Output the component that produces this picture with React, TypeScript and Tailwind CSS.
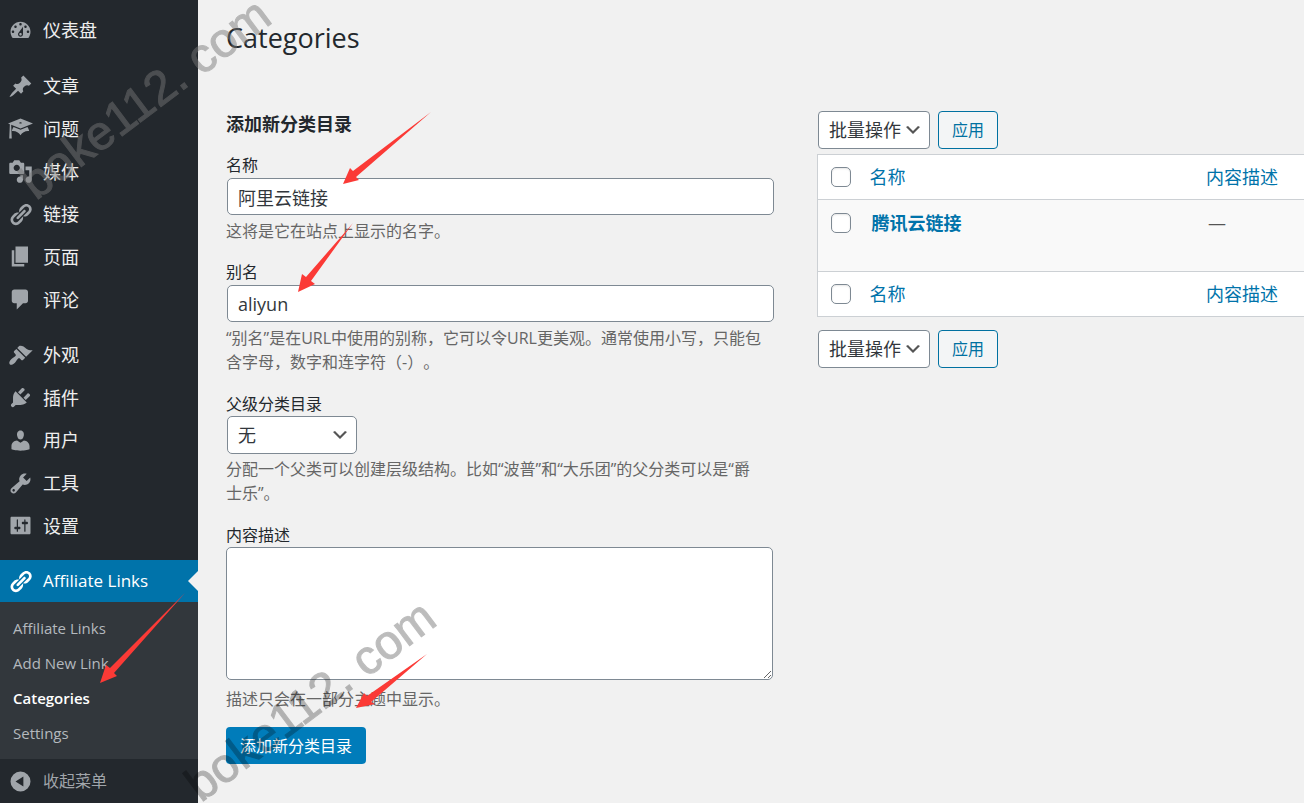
import React from 'react';

interface IconProps {
  name: keyof typeof iconPaths;
}

interface MenuEntry {
  label: string;
  icon: keyof typeof iconPaths;
}

const iconPaths = {
  dashboard:
    'M3.76 16h12.48c1.1-1.37 1.76-3.11 1.76-5 0-4.42-3.58-8-8-8s-8 3.58-8 8c0 1.89.66 3.63 1.76 5zM10 4c.55 0 1 .45 1 1s-.45 1-1 1-1-.45-1-1 .45-1 1-1zM6 6c.55 0 1 .45 1 1s-.45 1-1 1-1-.45-1-1 .45-1 1-1zm8 0c.55 0 1 .45 1 1s-.45 1-1 1-1-.45-1-1 .45-1 1-1zm-5.37 5.55L12 7v6c0 1.1-.9 2-2 2s-2-.9-2-2c0-.57.24-1.08.63-1.45zM4 10c.55 0 1 .45 1 1s-.45 1-1 1-1-.45-1-1 .45-1 1-1zm12 0c.55 0 1 .45 1 1s-.45 1-1 1-1-.45-1-1 .45-1 1-1zm-5 3c0-.55-.45-1-1-1s-1 .45-1 1 .45 1 1 1 1-.45 1-1z',
  post: 'M10.44 3.02l1.82-1.82 6.36 6.35-1.83 1.82c-1.05-.68-2.48-.57-3.41.36l-.75.75c-.92.93-1.04 2.35-.35 3.41l-1.83 1.82-2.41-2.41-2.8 2.79c-.42.42-3.38 2.71-3.8 2.29s1.86-3.39 2.28-3.81l2.79-2.79L4.1 9.36l1.83-1.82c1.05.69 2.48.57 3.4-.36l.75-.75c.93-.92 1.05-2.35.36-3.41z',
  learn: 'M10 10L2.54 7.02 3 18H1l.48-11.41L0 6l10-4 10 4zm0-5c-.55 0-1 .22-1 .5s.45.5 1 .5 1-.22 1-.5-.45-.5-1-.5zm0 6l5.57-2.23c.71.94 1.2 2.07 1.36 3.3-.3-.04-.61-.07-.93-.07-2.55 0-4.78 1.37-6 3.41C8.78 13.37 6.55 12 4 12c-.32 0-.63.03-.93.07.16-1.23.65-2.36 1.36-3.3z',
  media:
    'M13 11V4c0-.55-.45-1-1-1h-1.67L9 1H5L3.67 3H2c-.55 0-1 .45-1 1v7c0 .55.45 1 1 1h10c.55 0 1-.45 1-1zM7 4.5c1.38 0 2.5 1.12 2.5 2.5S8.38 9.5 7 9.5 4.5 8.38 4.5 7 5.62 4.5 7 4.5zM14 6h5v10.5c0 1.38-1.12 2.5-2.5 2.5S14 17.88 14 16.5s1.12-2.5 2.5-2.5c.17 0 .34.02.5.05V9h-3V6zm-4 8.05V13h2v3.5c0 1.38-1.12 2.5-2.5 2.5S7 17.88 7 16.5 8.12 14 9.5 14c.17 0 .34.02.5.05z',
  links:
    'M17.74 2.76c1.68 1.69 1.68 4.41 0 6.1l-1.53 1.52c-1.12 1.12-2.7 1.47-4.14 1.09l2.62-2.61.76-.77.76-.76c.84-.84.84-2.2 0-3.04-.84-.85-2.2-.85-3.04 0l-.77.76-3.38 3.38c-.37-1.44-.02-3.02 1.1-4.14l1.52-1.53c1.69-1.68 4.42-1.68 6.1 0zM8.59 13.43l5.34-5.34c.42-.42.42-1.1 0-1.52-.44-.43-1.13-.39-1.53 0l-5.33 5.34c-.42.42-.42 1.1 0 1.52.44.43 1.13.39 1.52 0zm-.76 2.29l4.14-4.15c.38 1.44.03 3.02-1.09 4.14l-1.52 1.53c-1.69 1.68-4.41 1.68-6.1 0-1.68-1.68-1.68-4.42 0-6.1l1.53-1.52c1.12-1.12 2.7-1.47 4.14-1.1l-4.14 4.15c-.85.84-.85 2.2 0 3.05.84.84 2.2.84 3.04 0z',
  page: 'M6 15V2h10v13H6zm-1 1h8v2H3V5h2v11z',
  comments: 'M5 2h9c1.1 0 2 .9 2 2v7c0 1.1-.9 2-2 2h-2l-5 5v-5H5c-1.1 0-2-.9-2-2V4c0-1.1.9-2 2-2z',
  appearance:
    'M14.48 11.06L7.41 3.99l1.5-1.5c.5-.56 2.3-.47 3.51.32 1.21.8 1.43 1.28 2.91 2.1 1.18.64 2.45 1.26 4.45.85zm-.71.71L6.7 4.7 4.93 6.47c-.39.39-.39 1.02 0 1.41l1.06 1.06c.39.39.39 1.03 0 1.42-.6.6-1.43 1.11-2.21 1.69-.35.26-.7.53-1.01.84C1.43 14.23.4 16.08 1.4 17.07c.99 1 2.84-.03 4.18-1.36.31-.31.58-.66.85-1.02.57-.78 1.08-1.61 1.69-2.21.39-.39 1.02-.39 1.41 0l1.06 1.06c.39.39 1.02.39 1.41 0z',
  plugins:
    'M13.11 4.36L9.87 7.6 8 5.73l3.24-3.24c.35-.34 1.05-.2 1.56.32.52.51.66 1.21.31 1.55zm-8 1.77l.91-1.12 9.01 9.01-1.19.84c-.71.71-2.63 1.16-3.82 1.16H6.14L4.9 17.26c-.59.59-1.54.59-2.12 0-.59-.58-.59-1.53 0-2.12l1.24-1.24v-3.88c0-1.13.4-3.19 1.09-3.89zm7.26 3.97l3.24-3.24c.34-.35 1.04-.21 1.55.31.52.51.66 1.21.31 1.55l-3.24 3.25z',
  users:
    'M10 9.25c-2.27 0-2.73-3.44-2.73-3.44C7 4.02 7.82 2 9.97 2c2.16 0 2.98 2.02 2.71 3.81 0 0-.41 3.44-2.68 3.44zm0 2.57L12.72 10c2.39 0 4.52 2.33 4.52 4.53v2.49s-3.65 1.13-7.24 1.13c-3.65 0-7.24-1.13-7.24-1.13v-2.49c0-2.25 1.94-4.48 4.47-4.48z',
  tools:
    'M16.68 9.77c-1.34 1.34-3.3 1.67-4.95.99l-5.41 6.52c-.99.99-2.59.99-3.58 0s-.99-2.59 0-3.57l6.52-5.42c-.68-1.65-.35-3.61.99-4.95 1.28-1.28 3.12-1.62 4.72-1.06l-2.89 2.89 2.82 2.82 2.86-2.87c.53 1.58.18 3.39-1.08 4.65zM3.81 16.21c.4.39 1.04.39 1.43 0 .4-.4.4-1.04 0-1.43-.39-.4-1.03-.4-1.43 0-.39.39-.39 1.03 0 1.43z',
  settings:
    'M18 16V4c0-.55-.45-1-1-1H3c-.55 0-1 .45-1 1v12c0 .55.45 1 1 1h14c.55 0 1-.45 1-1zM8 11h1c.55 0 1 .45 1 1s-.45 1-1 1H8v1.5c0 .28-.22.5-.5.5s-.5-.22-.5-.5V13H6c-.55 0-1-.45-1-1s.45-1 1-1h1V5.5c0-.28.22-.5.5-.5s.5.22.5.5V11zm5-2h-1c-.55 0-1-.45-1-1s.45-1 1-1h1V5.5c0-.28.22-.5.5-.5s.5.22.5.5V7h1c.55 0 1 .45 1 1s-.45 1-1 1h-1v5.5c0 .28-.22.5-.5.5s-.5-.22-.5-.5V9z',
  collapse: 'M10 2a8 8 0 1 1 0 16a8 8 0 1 1 0-16zM12.3 6L6 10l6.3 4z',
};

const contentMenu: MenuEntry[] = [
  { label: '文章', icon: 'post' },
  { label: '问题', icon: 'learn' },
  { label: '媒体', icon: 'media' },
  { label: '链接', icon: 'links' },
  { label: '页面', icon: 'page' },
  { label: '评论', icon: 'comments' },
];

const adminMenu: MenuEntry[] = [
  { label: '外观', icon: 'appearance' },
  { label: '插件', icon: 'plugins' },
  { label: '用户', icon: 'users' },
  { label: '工具', icon: 'tools' },
  { label: '设置', icon: 'settings' },
];

const submenu = ['Affiliate Links', 'Add New Link', 'Categories', 'Settings'];

const arrows = [
  '343,184 350,168 353,171 431,112 356,177 359,180',
  '298,292 302,274 306,277 353,223 311,281 315,284',
  '100,683 106,665 110,668 185,593 114,673 117,676',
  '356,708 364,693 367,696 427,654 371,702 375,704',
];

const Icon: React.FC<IconProps> = ({ name }) => (
  <svg viewBox="0 0 20 20" className="h-[25px] w-[25px] shrink-0" fill="currentColor" fillRule="evenodd" aria-hidden="true">
    <path d={iconPaths[name]} />
  </svg>
);

const MenuLink: React.FC<MenuEntry> = ({ label, icon }) => (
  <a href="#" className="flex h-full items-center gap-2.5 pl-2 text-lg leading-6 text-[#eee]">
    <span className="text-[#a0a5aa]">
      <Icon name={icon} />
    </span>
    {label}
  </a>
);

const Sidebar: React.FC = () => (
  <nav className="flex w-[198px] shrink-0 flex-col bg-[#23282d]">
    <div className="mt-[9px] h-[42px]">
      <MenuLink label="仪表盘" icon="dashboard" />
    </div>
    <ul className="mt-3.5 grid h-[256px] auto-rows-fr">
      {contentMenu.map((item) => (
        <li key={item.label}>
          <MenuLink {...item} />
        </li>
      ))}
    </ul>
    <ul className="mt-[13px] grid h-[213px] auto-rows-fr">
      {adminMenu.map((item) => (
        <li key={item.label}>
          <MenuLink {...item} />
        </li>
      ))}
    </ul>
    <a href="#" className="relative mt-[13px] flex h-[42px] items-center gap-2.5 bg-[#0073aa] pl-2 text-[17px] leading-6 text-white">
      <Icon name="links" />
      Affiliate Links
      <svg viewBox="0 0 10 20" className="absolute right-0 top-[11px] h-5 w-2.5" aria-hidden="true">
        <path d="M10 0L0 10l10 10z" fill="#f1f1f1" />
      </svg>
    </a>
    <ul className="grid h-[157px] auto-rows-fr bg-[#32373c] py-[9px] text-[15px] leading-6">
      {submenu.map((item) => (
        <li key={item} className="flex items-center pl-[13px]">
          <a href="#" className={item === 'Categories' ? 'font-semibold text-white' : 'text-[#b4b9be]'}>
            {item}
          </a>
        </li>
      ))}
    </ul>
    <button type="button" className="flex h-11 items-center gap-2.5 pl-2 text-base text-[#a0a5aa]">
      <Icon name="collapse" />
      收起菜单
    </button>
  </nav>
);

const Chevron: React.FC = () => (
  <svg viewBox="0 0 20 20" className="pointer-events-none absolute right-[7px] top-[9px] h-5 w-5" aria-hidden="true">
    <path d="M5 6l5 5 5-5 2 1-7 7-7-7 2-1z" fill="#555" />
  </svg>
);

const BulkActions: React.FC<{ id: string }> = ({ id }) => (
  <div className="flex gap-2 pl-px">
    <div className="relative">
      <select
        id={id}
        aria-label="选择批量操作"
        className="block h-[38px] w-[112px] appearance-none rounded-[4px] border border-[#7e8993] bg-white pl-2.5 text-lg leading-9 text-[#32373c]"
      >
        <option>批量操作</option>
      </select>
      <Chevron />
    </div>
    <button type="button" className="h-[38px] w-[60px] rounded-[4px] border border-[#0071a1] bg-[#f3f5f6] text-base text-[#0071a1]">
      应用
    </button>
  </div>
);

const Checkbox: React.FC<{ label: string }> = ({ label }) => (
  <input
    type="checkbox"
    aria-label={label}
    className="block h-5 w-5 appearance-none rounded-[5px] border border-[#7e8993] bg-white shadow-[inset_0_1px_2px_rgba(0,0,0,0.1)]"
  />
);

const HeadingRow: React.FC = () => (
  <tr className="h-[45px] bg-white">
    <th className="pl-[13px]">
      <Checkbox label="全选" />
    </th>
    <th className="pl-[9px] text-left font-normal">
      <a href="#" className="text-[#0073aa]">
        名称
      </a>
    </th>
    <th className="text-left font-normal">
      <a href="#" className="text-[#0073aa]">
        内容描述
      </a>
    </th>
  </tr>
);

const CategoryTable: React.FC = () => (
  <table className="my-[5px] w-full table-fixed border-collapse border-y border-l border-[#ccd0d4] text-lg leading-6">
    <colgroup>
      <col className="w-[43px]" />
      <col />
      <col className="w-[98px]" />
    </colgroup>
    <thead className="border-b border-[#ccd0d4]">
      <HeadingRow />
    </thead>
    <tbody>
      <tr className="h-[72px] bg-[#f9f9f9] align-top">
        <td className="pl-[13px] pt-[13px]">
          <Checkbox label="选择腾讯云链接" />
        </td>
        <td className="pl-[11px] pt-[11px]">
          <a href="#" className="font-bold text-[#0073aa]">
            腾讯云链接
          </a>
        </td>
        <td className="pl-0.5 pt-[11px] text-[#555]">—</td>
      </tr>
    </tbody>
    <tfoot className="border-t border-[#ccd0d4]">
      <HeadingRow />
    </tfoot>
  </table>
);

const fieldClass = 'block w-full rounded-[5px] border border-[#7e8993] bg-white px-2.5 text-lg text-[#32373c]';
const labelClass = 'block text-base leading-6 text-[#23282d]';
const hintClass = 'pr-2.5 text-base leading-6 text-[#666]';

const CategoryForm: React.FC = () => (
  <form>
    <h2 className="mb-[17px] text-lg font-bold leading-6 text-[#23282d]">添加新分类目录</h2>
    <div className="mb-[17px]">
      <label htmlFor="name" className={labelClass}>
        名称
      </label>
      <div className="pl-px pt-px">
        <input id="name" type="text" defaultValue="阿里云链接" className={`${fieldClass} h-[37px]`} />
      </div>
      <p className={`${hintClass} mt-1`}>这将是它在站点上显示的名字。</p>
    </div>
    <div className="mb-[18px]">
      <label htmlFor="slug" className={labelClass}>
        别名
      </label>
      <div className="pl-px pt-px">
        <input id="slug" type="text" defaultValue="aliyun" className={`${fieldClass} h-[37px]`} />
      </div>
      <p className={`${hintClass} mt-1`}>
        “别名”是在URL中使用的别称，它可以令URL更美观。通常使用小写，只能包含字母，数字和连字符（-）。
      </p>
    </div>
    <div className="mb-[18px]">
      <label htmlFor="parent" className={labelClass}>
        父级分类目录
      </label>
      <div className="relative ml-px w-[130px]">
        <select id="parent" className={`${fieldClass} h-[38px] appearance-none leading-9`}>
          <option>无</option>
        </select>
        <Chevron />
      </div>
      <p className={`${hintClass} mt-[3px]`}>
        分配一个父类可以创建层级结构。比如“波普”和“大乐团”的父分类可以是“爵士乐”。
      </p>
    </div>
    <div className="mb-4">
      <label htmlFor="description" className={labelClass}>
        内容描述
      </label>
      <div className="pr-px">
        <textarea id="description" className={`${fieldClass} h-[133px]`} />
      </div>
      <p className={`${hintClass} mt-[7px]`}>描述只会在一部分主题中显示。</p>
    </div>
    <button type="submit" className="h-[37px] rounded-[4px] bg-[#007cba] px-3.5 text-base text-white">
      添加新分类目录
    </button>
  </form>
);

const Annotations: React.FC = () => (
  <div className="pointer-events-none absolute left-0 top-0" aria-hidden="true">
    <svg width="1304" height="803" viewBox="0 0 1304 803">
      <g fontFamily="Liberation Sans, Arial, sans-serif" fontSize="48" strokeWidth="1">
        <text transform="translate(36 201) rotate(-37)" fill="#787878" stroke="#787878" opacity="0.48">
          boke112. com
        </text>
        <text transform="translate(201 803) rotate(-37)" fill="#000" stroke="#000" opacity="0.26">
          boke112. com
        </text>
      </g>
      {arrows.map((points) => (
        <polygon key={points} points={points} fill="#fb3a36" />
      ))}
    </svg>
  </div>
);

export default function App() {
  return (
    <div className="relative flex min-h-screen overflow-hidden bg-[#f1f1f1] font-['Open_Sans','Noto_Sans_CJK_SC',sans-serif] [text-spacing-trim:space-all]">
      <Sidebar />
      <main className="min-w-0 flex-1 pl-7">
        <h1 className="pt-5 text-[27px] leading-9 text-[#23282d]">Categories</h1>
        <div className="mt-14 grid grid-cols-[548fr_487fr] gap-[43px]">
          <CategoryForm />
          <section className="-mt-px min-w-0">
            <BulkActions id="bulk-top" />
            <CategoryTable />
            <div className="pt-2">
              <BulkActions id="bulk-bottom" />
            </div>
          </section>
        </div>
      </main>
      <Annotations />
    </div>
  );
}
